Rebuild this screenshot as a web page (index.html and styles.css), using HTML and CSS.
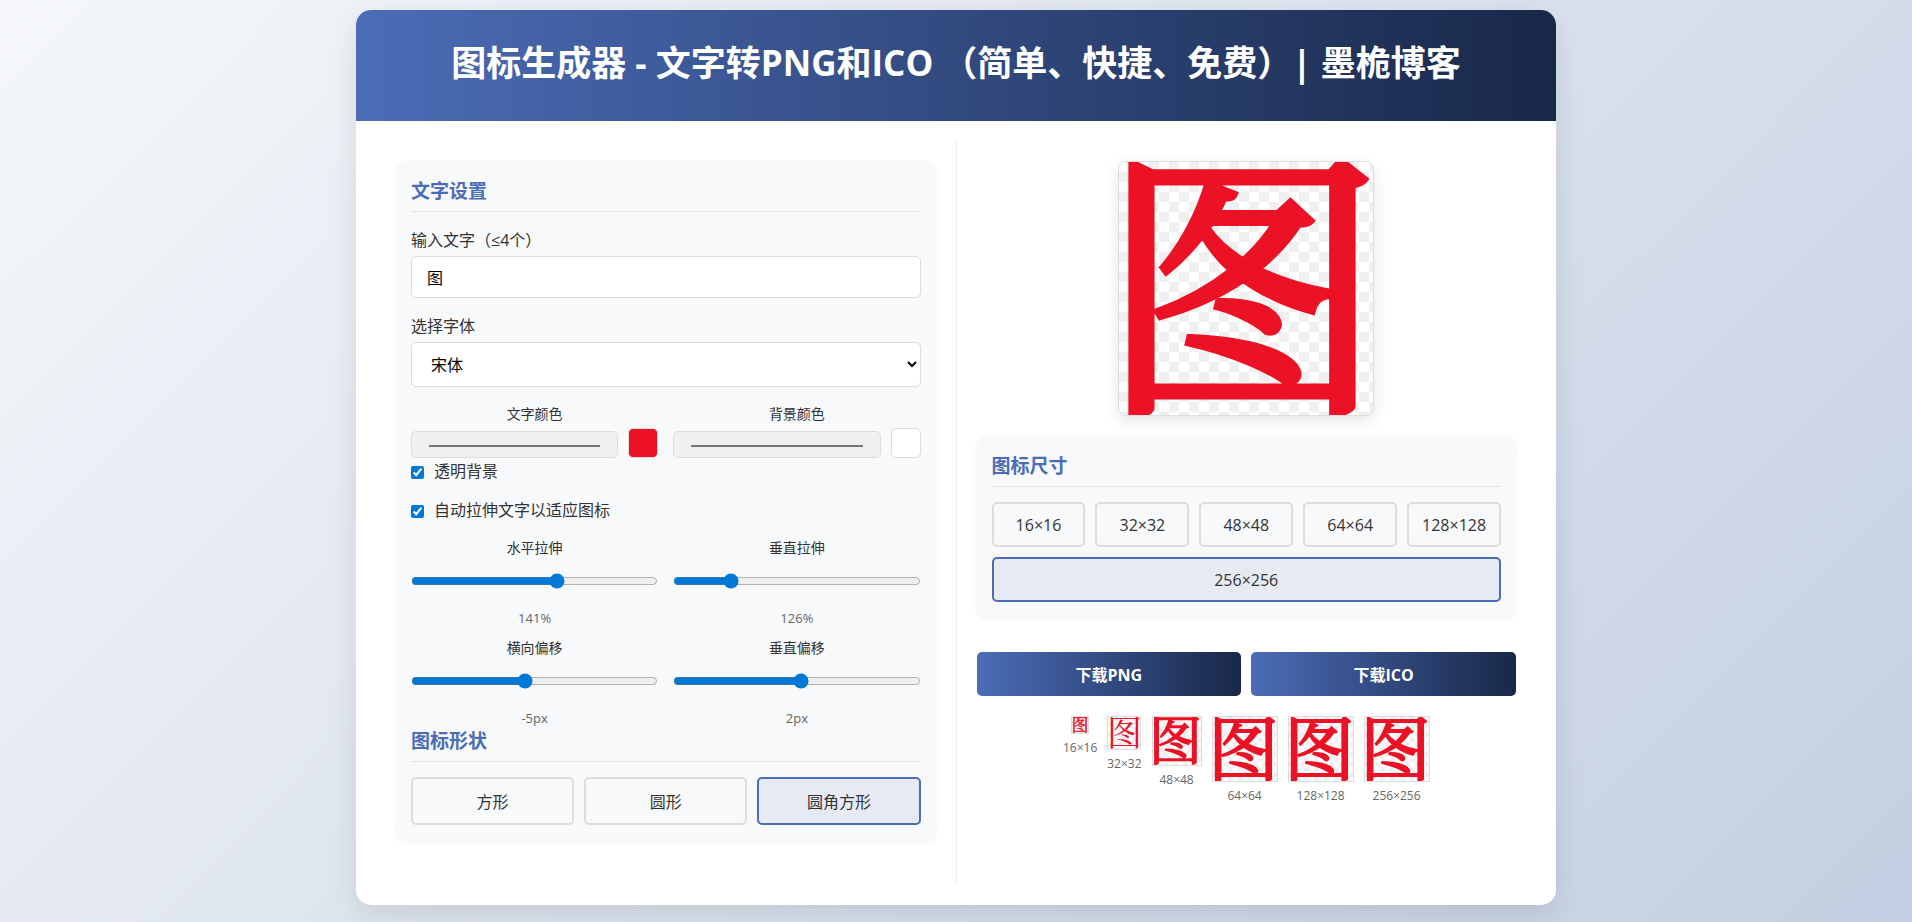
FILE: index.html
```html
<!DOCTYPE html>
<html lang="zh-CN">
<head>
    <meta charset="UTF-8">
    <meta name="viewport" content="width=device-width, initial-scale=1.0">
    <title>图标生成器 - 文字转PNG和ICO</title>
    <link rel="stylesheet" href="styles.css">
</head>
<body>
    <div class="container">
        <header>
            <h1>图标生成器 - 文字转PNG和ICO （简单、快捷、免费）| 墨桅博客</h1>
        </header>

        <main class="content">
            <!-- 左侧：设置 -->
            <section class="settings">
                <div class="panel">
                    <h3>文字设置</h3>
                    <div class="form-group">
                        <label for="textInput">输入文字（≤4个）</label>
                        <input type="text" id="textInput" maxlength="4" value="图">
                    </div>
                    <div class="form-group">
                        <label for="fontSelect">选择字体</label>
                        <select id="fontSelect">
                            <option selected>宋体</option>
                            <option>黑体</option>
                            <option>楷体</option>
                        </select>
                    </div>

                    <div class="row">
                        <div class="col">
                            <label for="textColor">文字颜色</label>
                            <div class="color-picker">
                                <input type="color" id="textColor" value="#eb1226">
                                <span class="color-preview text-color"></span>
                            </div>
                        </div>
                        <div class="col">
                            <label for="bgColor">背景颜色</label>
                            <div class="color-picker">
                                <input type="color" id="bgColor" value="#ffffff">
                                <span class="color-preview bg-color"></span>
                            </div>
                        </div>
                    </div>

                    <div class="checkbox-group">
                        <input type="checkbox" id="transparentBg" checked>
                        <label for="transparentBg">透明背景</label>
                    </div>
                    <div class="checkbox-group">
                        <input type="checkbox" id="autoStretch" checked>
                        <label for="autoStretch">自动拉伸文字以适应图标</label>
                    </div>

                    <div class="row slider-row">
                        <div class="col">
                            <label for="stretchX">水平拉伸</label>
                            <input type="range" id="stretchX" min="50" max="203" value="141">
                            <span class="value">141%</span>
                        </div>
                        <div class="col">
                            <label for="stretchY">垂直拉伸</label>
                            <input type="range" id="stretchY" min="50" max="405" value="126">
                            <span class="value">126%</span>
                        </div>
                    </div>
                    <div class="row slider-row">
                        <div class="col">
                            <label for="offsetX">横向偏移</label>
                            <input type="range" id="offsetX" min="-60" max="60" value="-5">
                            <span class="value">-5px</span>
                        </div>
                        <div class="col">
                            <label for="offsetY">垂直偏移</label>
                            <input type="range" id="offsetY" min="-60" max="60" value="2">
                            <span class="value">2px</span>
                        </div>
                    </div>

                    <h3>图标形状</h3>
                    <div class="options shape-options">
                        <button type="button" class="option">方形</button>
                        <button type="button" class="option">圆形</button>
                        <button type="button" class="option active">圆角方形</button>
                    </div>
                </div>
            </section>

            <!-- 右侧：预览 -->
            <section class="preview">
                <div class="icon-preview checker">图</div>

                <div class="panel">
                    <h3>图标尺寸</h3>
                    <div class="options size-options">
                        <button type="button" class="option">16×16</button>
                        <button type="button" class="option">32×32</button>
                        <button type="button" class="option">48×48</button>
                        <button type="button" class="option">64×64</button>
                        <button type="button" class="option">128×128</button>
                        <button type="button" class="option active">256×256</button>
                    </div>
                </div>

                <div class="downloads">
                    <button type="button" class="btn">下载PNG</button>
                    <button type="button" class="btn">下载ICO</button>
                </div>

                <div class="thumbs">
                    <div class="thumb">
                        <div class="thumb-icon checker s16">图</div>
                        <span>16×16</span>
                    </div>
                    <div class="thumb">
                        <div class="thumb-icon checker s32">图</div>
                        <span>32×32</span>
                    </div>
                    <div class="thumb">
                        <div class="thumb-icon checker s48">图</div>
                        <span>48×48</span>
                    </div>
                    <div class="thumb">
                        <div class="thumb-icon checker s64">图</div>
                        <span>64×64</span>
                    </div>
                    <div class="thumb">
                        <div class="thumb-icon checker s64">图</div>
                        <span>128×128</span>
                    </div>
                    <div class="thumb">
                        <div class="thumb-icon checker s64">图</div>
                        <span>256×256</span>
                    </div>
                </div>
            </section>
        </main>
    </div>
</body>
</html>
```
FILE: styles.css
```css
:root {
    --primary: #4b6cb7;
    --primary-dark: #182848;
    --icon-color: #eb1226;
    --border: #ddd;
}
* {
    box-sizing: border-box;
    margin: 0;
    padding: 0;
}
body {
    font-family: "Open Sans", "Noto Sans CJK SC", sans-serif;
    font-size: 16px;
    line-height: 26px;
    color: #333;
    background: linear-gradient(135deg, #f5f7fa 0%, #c3cfe2 100%);
    min-height: 100vh;
    padding: 10px;
}
.container {
    max-width: 1200px;
    margin: 0 auto;
    background: #fff;
    border-radius: 15px;
    box-shadow: 0 10px 30px rgba(0, 0, 0, 0.1);
    overflow: hidden;
}
header {
    background: linear-gradient(to right, var(--primary), var(--primary-dark));
    color: #fff;
    padding: 25px 25px 30px;
    text-align: center;
}
header h1 {
    font-size: 35px;
    line-height: 56px;
}
.content {
    display: flex;
    padding: 20px;
}
.settings,
.preview {
    flex: 1;
    min-width: 0;
    padding: 20px;
}
.preview {
    border-left: 1px solid #eee;
}
.panel {
    background: #f8f9fb;
    border-radius: 10px;
    padding: 15px;
    margin-bottom: 25px;
    box-shadow: 0 2px 5px rgba(0, 0, 0, 0.05);
}
.panel h3 {
    color: var(--primary);
    font-size: 19px;
    line-height: 30px;
    padding-bottom: 5px;
    margin-bottom: 15px;
    border-bottom: 1px solid #e5e7ea;
}

/* 表单 */
input,
select,
button {
    font-family: inherit;
    font-size: 16px;
}
.form-group {
    margin-bottom: 15px;
}
.form-group label {
    display: block;
    margin-bottom: 3px;
}
input[type="text"],
select {
    display: block;
    width: 100%;
    height: 42px;
    padding: 0 15px;
    color: #000;
    background: #fff;
    border: 1px solid var(--border);
    border-radius: 5px;
}
select {
    height: 45px;
}
.row {
    display: flex;
    gap: 15px;
}
.col {
    flex: 1;
    min-width: 0;
    display: flex;
    flex-direction: column;
}
.col label {
    font-size: 14px;
    line-height: 23px;
    text-align: center;
}
.color-picker {
    display: flex;
    align-items: flex-end;
    gap: 10px;
    margin-top: 3px;
}
input[type="color"] {
    flex: 1;
    min-width: 0;
    height: 27px;
    padding: 12px 15px;
    background: #f0f0f0;
    border: 1px solid var(--border);
    border-radius: 5px;
}
.color-preview {
    width: 30px;
    height: 30px;
    border: 1px solid var(--border);
    border-radius: 5px;
}
.text-color {
    background: var(--icon-color);
}
.bg-color {
    background: #fff;
}
.checkbox-group {
    display: flex;
    align-items: center;
    gap: 10px;
    margin-bottom: 13px;
}
.checkbox-group input {
    width: 13px;
    height: 13px;
    margin-top: 3px;
    accent-color: #0078d7;
}
.slider-row {
    margin-bottom: 11px;
}
.slider-row + h3 {
    margin-top: -10px;
}
input[type="range"] {
    height: 44px;
    accent-color: #0078d7;
}
.value {
    margin-top: 9px;
    font-size: 13px;
    line-height: 13px;
    text-align: center;
    color: #666;
}

/* 选项按钮 */
.options {
    display: flex;
    flex-wrap: wrap;
    gap: 10px;
}
.option {
    flex: 1;
    height: 48px;
    color: #333;
    background: #f8f9fb;
    border: 2px solid var(--border);
    border-radius: 5px;
    cursor: pointer;
}
.option.active {
    border-color: var(--primary);
    background: #e6eaf4;
}
.size-options .option {
    flex: 1 0 80px;
    height: 45px;
}

/* 预览 */
.checker {
    display: flex;
    align-items: flex-start;
    justify-content: center;
    overflow: hidden;
    color: var(--icon-color);
    background: repeating-conic-gradient(#f0f0f0 0% 25%, #fff 0% 50%) 0 0 / 20px 20px;
    border: 1px solid var(--border);
    font-family: "Noto Serif CJK SC", "Noto Sans CJK SC", serif;
    line-height: 0.78;
    -webkit-text-stroke: 0.028em var(--icon-color);
}
.icon-preview {
    width: 256px;
    height: 255px;
    margin: 0 auto 20px;
    padding-right: 8px;
    border-radius: 8px;
    box-shadow: 0 5px 15px rgba(0, 0, 0, 0.1);
    font-size: 282px;
}
.downloads {
    display: flex;
    gap: 10px;
    margin-top: 35px;
}
.btn {
    flex: 1;
    height: 44px;
    color: #fff;
    font-weight: 700;
    background: linear-gradient(to right, var(--primary), var(--primary-dark));
    border: none;
    border-radius: 5px;
    cursor: pointer;
}
.thumbs {
    display: flex;
    justify-content: center;
    gap: 10px;
    margin-top: 20px;
}
.thumb {
    display: flex;
    flex-direction: column;
    align-items: center;
    font-size: 12px;
    line-height: 19px;
    color: #666;
}
.thumb span {
    margin-top: 4px;
}
.thumb-icon {
    padding-right: 2px;
    background-size: 10px 10px;
}
.s16 {
    width: 18px;
    height: 18px;
    padding-right: 0;
    font-size: 17px;
    line-height: 14px;
}
.s32 {
    width: 34px;
    height: 34px;
    padding-right: 0;
    font-size: 35px;
    line-height: 29px;
    -webkit-text-stroke: 0;
}
.s48 {
    width: 50px;
    height: 50px;
    font-size: 53px;
}
.s64 {
    width: 66px;
    height: 66px;
    font-size: 71px;
}
```
